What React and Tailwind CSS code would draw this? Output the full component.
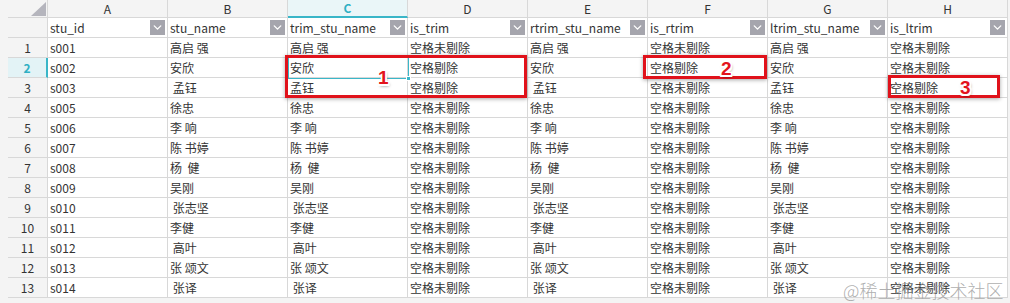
import { ChevronDown } from 'lucide-react';

const N = '空格未剔除';
const Y = '空格剔除';

const cols = ['A', 'B', 'C', 'D', 'E', 'F', 'G', 'H'];
const fields = ['stu_id', 'stu_name', 'trim_stu_name', 'is_trim', 'rtrim_stu_name', 'is_rtrim', 'ltrim_stu_name', 'is_ltrim'];

const rows = [
  ['s001', '高启 强', '高启 强', N, '高启 强', N, '高启 强', N],
  ['s002', '安欣', '安欣', Y, '安欣', Y, '安欣', N],
  ['s003', ' 孟钰', '孟钰', Y, ' 孟钰', N, '孟钰', Y],
  ['s005', '徐忠', '徐忠', N, '徐忠', N, '徐忠', N],
  ['s006', '李 响', '李 响', N, '李 响', N, '李 响', N],
  ['s007', '陈 书婷', '陈 书婷', N, '陈 书婷', N, '陈 书婷', N],
  ['s008', '杨  健', '杨  健', N, '杨  健', N, '杨  健', N],
  ['s009', '吴刚', '吴刚', N, '吴刚', N, '吴刚', N],
  ['s010', ' 张志坚', ' 张志坚', N, ' 张志坚', N, ' 张志坚', N],
  ['s011', '李健', '李健', N, '李健', N, '李健', N],
  ['s012', ' 高叶', ' 高叶', N, ' 高叶', N, ' 高叶', N],
  ['s013', '张 颂文', '张 颂文', N, '张 颂文', N, '张 颂文', N],
  ['s014', ' 张译', ' 张译', N, ' 张译', N, ' 张译', N],
];

// red digit with white outline, like the annotation markers
const Badge = ({ n, className }) => (
  <div
    className={`absolute text-[19px] leading-none font-bold text-[#e3141c] [font-family:'Liberation_Sans',Arial,sans-serif] [text-shadow:1.5px_0_0_#fff,-1.5px_0_0_#fff,0_1.5px_0_#fff,0_-1.5px_0_#fff,1.5px_1.5px_0_#fff,-1.5px_-1.5px_0_#fff,1.5px_-1.5px_0_#fff,-1.5px_1.5px_0_#fff,1px_2px_3px_rgba(0,0,0,0.55)] ${className}`}
  >
    {n}
  </div>
);

const RedBox = ({ className }) => (
  <div className={`absolute border-[3px] border-[#e0121b] shadow-[0_1px_4px_rgba(0,0,0,0.35)] ${className}`} />
);

export default function App() {
  return (
    <div
      className="relative w-[1010px] h-[303px] bg-[#f4f4f4] overflow-hidden text-[12px] text-[#333]"
      style={{ fontFamily: '"Noto Sans CJK SC", "Noto Sans", sans-serif' }}
    >
      <div className="pl-[8px]">
        {/* column letters */}
        <div className="flex h-[18px]">
          <div className="w-[40px] border-r border-b border-[#d8d8d8] relative">
            <svg className="absolute left-[22px] top-[2px]" width="16" height="14" viewBox="0 0 16 14">
              <polygon points="16,0 16,14 1,14" fill="#b5b5bd" />
            </svg>
          </div>
          {cols.map((c) =>
            c === 'C' ? (
              <div key={c} className="w-[120px] flex items-center justify-center bg-[#eaf6f8] border-r border-[#d8d8d8] border-b-2 border-b-[#39b6c8] text-[#2fb0c4] font-bold">
                {c}
              </div>
            ) : (
              <div key={c} className="w-[120px] flex items-center justify-center border-r border-b border-[#d8d8d8]">
                {c}
              </div>
            )
          )}
        </div>

        {/* field names */}
        <div className="flex h-[20px]">
          <div className="w-[40px] border-r border-b border-[#d8d8d8]" />
          {fields.map((f) => (
            <div key={f} className="w-[120px] bg-white border-r border-b border-[#d8d8d8] flex items-center justify-between pl-[2px] pr-[2px]">
              <span>{f}</span>
              <span className="w-[15px] h-[15px] bg-[#a5a5ad] flex items-center justify-center">
                <ChevronDown size={13} color="white" strokeWidth={2.5} />
              </span>
            </div>
          ))}
        </div>

        {/* data rows */}
        {rows.map((r, i) => (
          <div key={i} className="flex h-[20px]">
            {i === 1 ? (
              <div className="w-[40px] bg-[#e3f3f6] border-r-2 border-r-[#39b6c8] border-b border-b-[#d8d8d8] flex items-center justify-center text-[#2fb0c4] font-bold">
                {i + 1}
              </div>
            ) : (
              <div className="w-[40px] border-r border-b border-[#d8d8d8] flex items-center justify-center">{i + 1}</div>
            )}
            {r.map((v, j) => (
              <div key={j} className="w-[120px] bg-white border-r border-b border-[#d8d8d8] flex items-center pl-[2px] whitespace-pre">
                {v}
              </div>
            ))}
          </div>
        ))}
      </div>

      {/* active cell C2 */}
      <div className="absolute left-[288px] top-[57px] w-[121px] h-[22px] border border-[#3bb7c9]" />
      <div className="absolute left-[406px] top-[76px] w-[5px] h-[5px] bg-[#3bb7c9] border border-white" />

      <RedBox className="left-[285px] top-[55px] w-[242px] h-[43px]" />
      <RedBox className="left-[643px] top-[55px] w-[124px] h-[24px]" />
      <RedBox className="left-[888px] top-[75px] w-[112px] h-[23px]" />

      <Badge n="1" className="left-[378px] top-[68px]" />
      <Badge n="2" className="left-[721px] top-[59px]" />
      <Badge n="3" className="left-[960px] top-[78px]" />

      <div className="absolute left-[843px] top-[277px] text-[18px] text-[#9a9a9a]/80 font-light whitespace-nowrap">
        @稀土掘金技术社区
      </div>
    </div>
  );
}
